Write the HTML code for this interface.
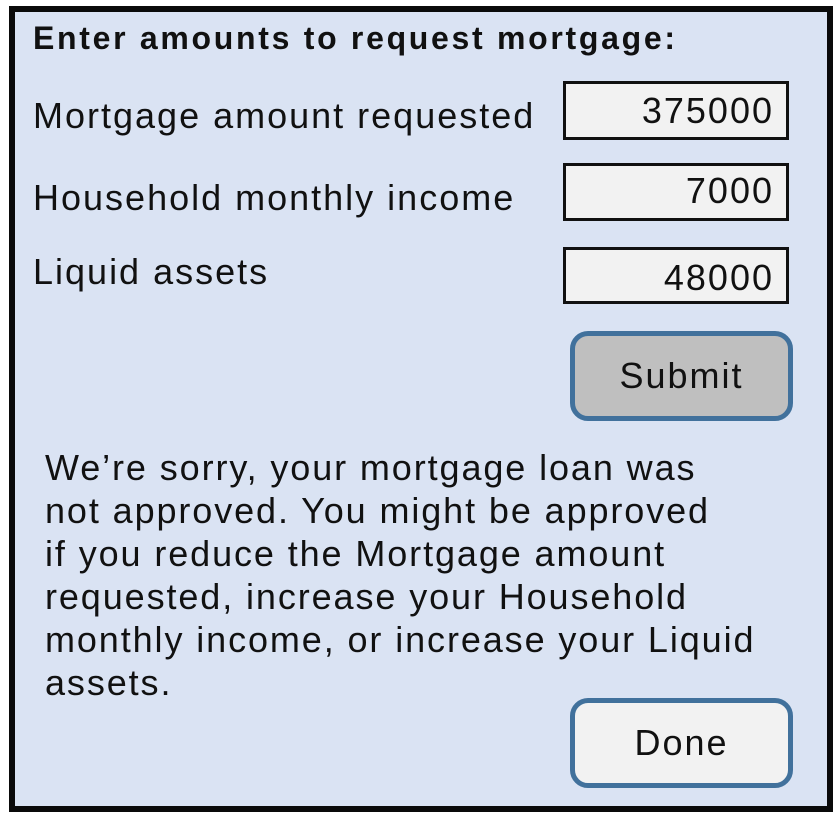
<!DOCTYPE html>
<html><head><meta charset="utf-8"><style>
html,body{margin:0;padding:0;background:#fff;}
body{width:840px;height:818px;position:relative;overflow:hidden;font-family:"Liberation Sans",sans-serif;color:#111;}
.frame{position:absolute;left:9px;top:6px;width:812px;height:794px;border:6px solid #0a0a0a;background:#dae3f3;}
.t{position:absolute;white-space:nowrap;}
.lab{font-size:36px;letter-spacing:2px;}
.box{position:absolute;left:563px;width:226px;border:3px solid #111;background:#f2f2f2;text-align:right;font-size:36px;letter-spacing:2px;box-sizing:border-box;padding-right:12px;}
.btn{position:absolute;left:570px;width:223px;height:90px;box-sizing:border-box;border:5px solid #41719c;border-radius:18px;text-align:center;line-height:80px;font-size:36px;letter-spacing:2px;}
.msg{position:absolute;left:45px;top:446px;font-size:36px;letter-spacing:1.9px;line-height:43px;white-space:nowrap;}
</style></head><body>
<div class="frame"></div>
<div class="t" style="left:33px;top:20px;font-size:32px;font-weight:bold;letter-spacing:2.7px;">Enter amounts to request mortgage:</div>
<div class="t lab" style="left:33px;top:95px;">Mortgage amount requested</div>
<div class="t lab" style="left:33px;top:177px;">Household monthly income</div>
<div class="t lab" style="left:33px;top:251px;">Liquid assets</div>
<div class="box" style="top:81px;height:59px;line-height:53px;">375000</div>
<div class="box" style="top:163px;height:58px;line-height:50px;">7000</div>
<div class="box" style="top:247px;height:57px;line-height:55px;">48000</div>
<div class="btn" style="top:331px;background:#bfbfbf;">Submit</div>
<div class="msg">We’re sorry, your mortgage loan was<br>not approved. You might be approved<br>if you reduce the Mortgage amount<br>requested, increase your Household<br>monthly income, or increase your Liquid<br>assets.</div>
<div class="btn" style="top:698px;background:#f2f2f2;">Done</div>
</body></html>
